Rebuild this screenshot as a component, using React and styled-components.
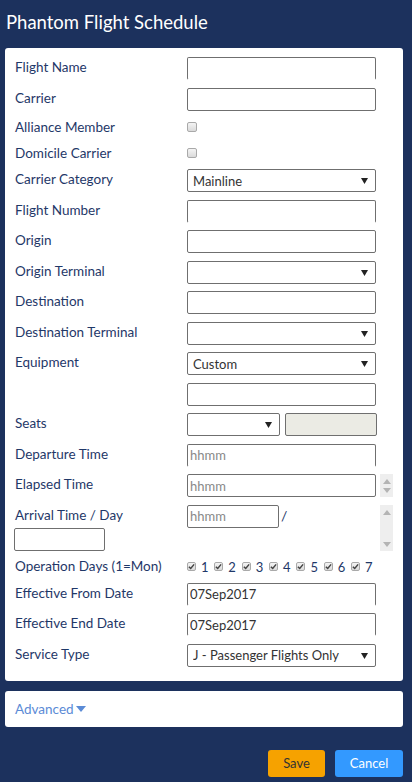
import React from "react";
import styled, { createGlobalStyle } from "styled-components";

const FONT = `"Lato", "Liberation Sans", sans-serif`;

const GlobalStyle = createGlobalStyle`
  html, body { margin: 0; padding: 0; }
  body {
    background: #1c315d;
    font-family: ${FONT};
    min-height: 782px;
  }
  * { box-sizing: border-box; }
`;

const Page = styled.div`
  width: 412px;
  min-height: 782px;
  background: #1c315d;
  padding: 0 9px 0 5px;
`;

const Title = styled.h1`
  margin: 0;
  height: 48px;
  display: flex;
  align-items: center;
  padding: 0 0 4px 1px;
  color: #ffffff;
  font-size: 18.5px;
  font-weight: 400;
  font-family: ${FONT};
`;

const Card = styled.div`
  background: #ffffff;
  border-radius: 3px;
  padding: 9px 9px 14px 9px;
`;

const AdvancedBar = styled.div`
  background: #ffffff;
  border-radius: 3px;
  height: 36px;
  margin-top: 10px;
  padding: 0 9px;
  display: flex;
  align-items: center;
`;

const Row = styled.div`
  display: flex;
  align-items: flex-start;
  margin-bottom: 7.5px;
  min-height: ${(p) => (p.$check ? `${p.$check}px` : "auto")};
  &:last-child { margin-bottom: 0; }
`;

const Label = styled.label`
  width: 173px;
  flex-shrink: 0;
  padding: ${(p) => (p.$check ? "0" : "1px")} 0 0 1px;
  color: #1f3868;
  font-size: 13.5px;
  line-height: ${(p) => (p.$check ? `${p.$check}px` : "18px")};
  font-family: ${FONT};
`;

const TextInput = styled.input`
  width: ${(p) => p.$w || 189}px;
  height: 23px;
  margin: 0;
  border: 1px solid #6f6f6f;
  border-bottom-color: ${(p) => (p.$clip ? "transparent" : "#6f6f6f")};
  border-radius: 2px;
  padding: 0 2px;
  font-family: ${FONT};
  font-size: 13px;
  color: #333;
  background: ${(p) => (p.disabled ? "#ebebe4" : "#fff")};
  outline: none;
  &::placeholder { color: #888; }
`;

const SelectWrap = styled.div`
  position: relative;
  width: ${(p) => p.$w || 189}px;
  height: 23px;
  flex-shrink: 0;
`;

const Select = styled.select`
  appearance: none;
  -webkit-appearance: none;
  width: 100%;
  height: 100%;
  margin: 0;
  border: 1px solid #6f6f6f;
  border-radius: 2px;
  padding: 0 18px 0 5px;
  font-family: ${FONT};
  font-size: 13px;
  color: #333;
  background: #fff;
  outline: none;
`;

const Caret = styled.svg`
  position: absolute;
  right: 8px;
  top: 9px;
  pointer-events: none;
`;

const Controls = styled.div`
  display: flex;
  align-items: center;
  gap: ${(p) => p.$gap || 0}px;
`;

const BoxCheck = styled.span`
  display: inline-flex;
  align-items: center;
  justify-content: center;
  width: ${(p) => p.$size || 10}px;
  height: ${(p) => p.$size || 10}px;
  border: 1px solid #a9a9a9;
  border-radius: 2px;
  background: linear-gradient(#f4f4f4, #dadada);
  flex-shrink: 0;
`;

const CheckCell = styled.div`
  display: flex;
  align-items: center;
  height: 18px;
`;

const DayList = styled.div`
  display: flex;
  align-items: center;
  height: 17px;
  gap: 5.8px;
`;

const Day = styled.span`
  display: inline-flex;
  align-items: center;
  gap: 5px;
  font-size: 13px;
  color: #1f3868;
  font-family: ${FONT};
`;

const Spinner = styled.div`
  width: 13px;
  height: ${(p) => p.$h || 23}px;
  margin-left: 4px;
  background: #eeeeee;
  display: flex;
  flex-direction: column;
  justify-content: space-between;
  align-items: center;
  padding: 5px 0 4px;
  flex-shrink: 0;
`;

const TimeGrid = styled.div`
  display: grid;
  grid-template-columns: 173px 189px 17px;
  grid-template-rows: 23px 23px;
  margin-bottom: 7.5px;
`;

const SpinCell = styled.div`
  grid-row: 1 / span 2;
  grid-column: 3;
`;

const Slash = styled.span`
  color: #1f3868;
  font-size: 14px;
  margin-left: 2px;
  line-height: 18px;
  align-self: flex-start;
  padding-top: 2px;
`;

const AdvancedLink = styled.a`
  display: inline-flex;
  align-items: center;
  gap: 2px;
  color: #5b8bd6;
  font-size: 13.5px;
  font-family: ${FONT};
  text-decoration: none;
  line-height: 18px;
  padding-left: 1px;
`;

const Footer = styled.div`
  display: flex;
  justify-content: flex-end;
  gap: 10px;
  margin-top: 23px;
`;

const Button = styled.button`
  height: 27px;
  width: ${(p) => p.$w}px;
  border: none;
  border-radius: 3px;
  font-family: ${FONT};
  font-size: 13px;
  background: ${(p) => (p.$primary ? "#f6a200" : "#3399ff")};
  color: ${(p) => (p.$primary ? "#333" : "#fff")};
  padding: 0;
`;

const DownArrow = ({ color = "#222" }) => (
  <Caret width="7" height="6" viewBox="0 0 7 6">
    <polygon points="0,0 7,0 3.5,6" fill={color} />
  </Caret>
);

const Tri = ({ up }) => (
  <svg width="8" height="5" viewBox="0 0 8 5">
    <polygon points={up ? "0,5 8,5 4,0" : "0,0 8,0 4,5"} fill="#b4b4b4" />
  </svg>
);

const Check = ({ checked, size }) => (
  <BoxCheck $size={size}>
    {checked && (
      <svg width="7" height="7" viewBox="0 0 8 8">
        <path d="M1 4.2 L3.1 6.3 L7 1.6" stroke="#444" strokeWidth="1.7" fill="none" />
      </svg>
    )}
  </BoxCheck>
);

const SelectField = ({ w, value, options = [] }) => (
  <SelectWrap $w={w}>
    <Select defaultValue={value}>
      {options.map((o) => (
        <option key={o}>{o}</option>
      ))}
    </Select>
    <DownArrow />
  </SelectWrap>
);

export default function App() {
  return (
    <Page>
      <GlobalStyle />
      <Title>Phantom Flight Schedule</Title>
      <Card>
        <Row>
          <Label>Flight Name</Label>
          <TextInput $clip />
        </Row>
        <Row>
          <Label>Carrier</Label>
          <TextInput />
        </Row>
        <Row $check={18}>
          <Label $check={18}>Alliance Member</Label>
          <CheckCell>
            <Check />
          </CheckCell>
        </Row>
        <Row $check={18}>
          <Label $check={18}>Domicile Carrier</Label>
          <CheckCell>
            <Check />
          </CheckCell>
        </Row>
        <Row>
          <Label>Carrier Category</Label>
          <SelectField value="Mainline" options={["Mainline", "Regional"]} />
        </Row>
        <Row>
          <Label>Flight Number</Label>
          <TextInput $clip />
        </Row>
        <Row>
          <Label>Origin</Label>
          <TextInput />
        </Row>
        <Row>
          <Label>Origin Terminal</Label>
          <SelectField options={[""]} />
        </Row>
        <Row>
          <Label>Destination</Label>
          <TextInput />
        </Row>
        <Row>
          <Label>Destination Terminal</Label>
          <SelectField options={[""]} />
        </Row>
        <Row>
          <Label>Equipment</Label>
          <SelectField value="Custom" options={["Custom"]} />
        </Row>
        <Row>
          <Label />
          <TextInput />
        </Row>
        <Row>
          <Label>Seats</Label>
          <Controls $gap={5}>
            <SelectField w={93} options={[""]} />
            <TextInput $w={92} disabled />
          </Controls>
        </Row>
        <Row>
          <Label>Departure Time</Label>
          <TextInput $clip placeholder="hhmm" />
        </Row>
        <Row>
          <Label>Elapsed Time</Label>
          <Controls>
            <TextInput placeholder="hhmm" />
            <Spinner>
              <Tri up />
              <Tri />
            </Spinner>
          </Controls>
        </Row>
        <TimeGrid>
          <Label>Arrival Time / Day</Label>
          <Controls>
            <TextInput $w={92} placeholder="hhmm" />
            <Slash>/</Slash>
          </Controls>
          <SpinCell>
            <Spinner $h={46}>
              <Tri up />
              <Tri />
            </Spinner>
          </SpinCell>
          <TextInput $w={91} />
        </TimeGrid>
        <Row $check={17}>
          <Label $check={17}>Operation Days (1=Mon)</Label>
          <DayList>
            {[1, 2, 3, 4, 5, 6, 7].map((d) => (
              <Day key={d}>
                <Check checked size={9} />
                {d}
              </Day>
            ))}
          </DayList>
        </Row>
        <Row>
          <Label>Effective From Date</Label>
          <TextInput $clip defaultValue="07Sep2017" />
        </Row>
        <Row>
          <Label>Effective End Date</Label>
          <TextInput $clip defaultValue="07Sep2017" />
        </Row>
        <Row>
          <Label>Service Type</Label>
          <SelectField
            value="J - Passenger Flights Only"
            options={["J - Passenger Flights Only"]}
          />
        </Row>
      </Card>
      <AdvancedBar>
        <AdvancedLink href="#">
          Advanced
          <svg width="10" height="6" viewBox="0 0 10 6">
            <polygon points="0,0 10,0 5,6" fill="#5b8bd6" />
          </svg>
        </AdvancedLink>
      </AdvancedBar>
      <Footer>
        <Button $primary $w={57}>Save</Button>
        <Button $w={68}>Cancel</Button>
      </Footer>
    </Page>
  );
}
